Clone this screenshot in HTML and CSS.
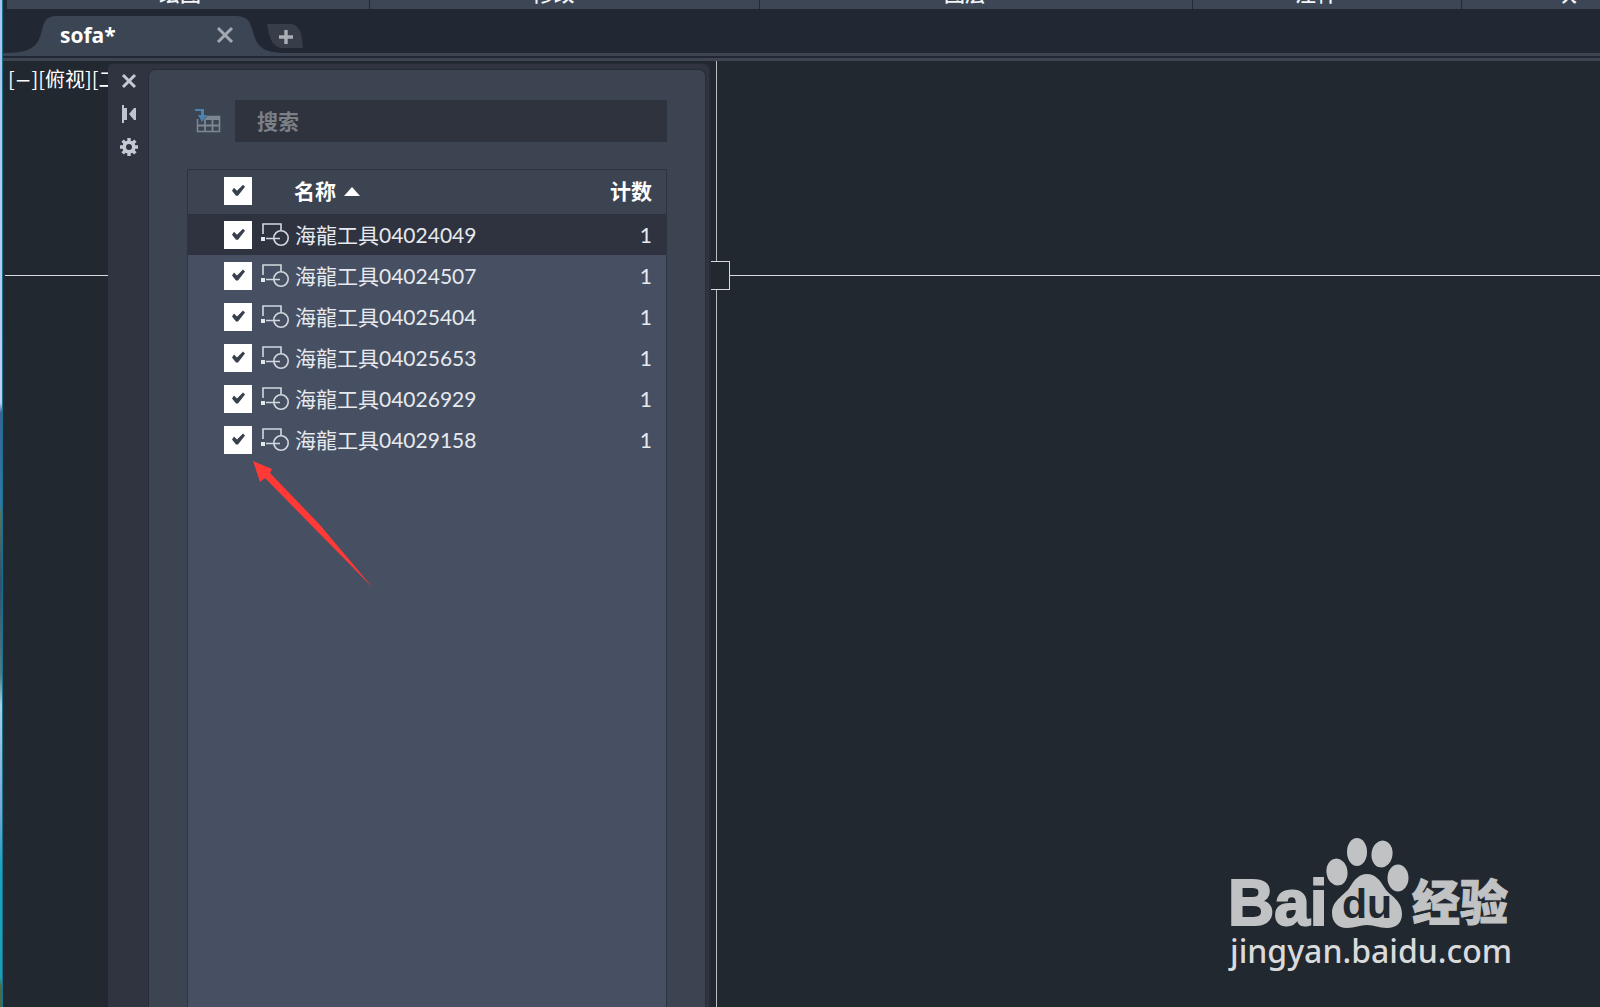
FILE: index.html
```
<!DOCTYPE html>
<html lang="zh-CN">
<head>
	<meta charset="UTF-8">
	<title>sofa*</title>
	<link rel="stylesheet" href="styles.css">
</head>
<body>
	<div class="desktop-edge"></div>
	<div class="app">
		<div class="ribbon">
			<div class="ribbon-panel draw">绘图</div>
			<div class="ribbon-panel modify">修改</div>
			<div class="ribbon-panel layers">图层</div>
			<div class="ribbon-panel notes">注释</div>
			<div class="ribbon-panel block">块</div>
		</div>

		<div class="tabs">
			<div class="tab">
				<svg class="tab-shape" viewBox="0 0 284 40" preserveAspectRatio="none"><path d="M0 40V37C26 37 34 32 38 18C41 6 42 0 54 0H231C245 0 247 5 250 16C254 31 260 37 284 37V40Z" fill="#3c4553"/></svg>
				<span class="tab-name">sofa*</span>
				<button class="tab-close" title="关闭"><svg width="18" height="18" viewBox="0 0 18 18"><path d="M2 2L16 16M16 2L2 16" stroke="#a4a9b1" stroke-width="3"/></svg></button>
			</div>
			<button class="tab-new" title="新图形"><svg width="36" height="24" viewBox="0 0 36 24"><path d="M0 0H25C33 2 35 10 36 24H14C4 22 2 12 0 0Z" fill="#373d49"/><path d="M19 6V20M12 13H26" stroke="#a9adb4" stroke-width="3.4"/></svg></button>
		</div>

		<div class="workspace">
			<div class="cross-h"></div>
			<div class="cross-v"></div>
			<div class="pickbox"></div>

			<div class="view-label">[<span class="minus">−</span>][俯视][二维线框]</div>

			<div class="palette">
				<div class="rail">
					<button title="关闭"><svg width="18" height="18" viewBox="0 0 18 18"><path d="M3 3L15 15M15 3L3 15" stroke="#c5c9d2" stroke-width="3"/></svg></button>
					<button title="自动隐藏"><svg width="18" height="18" viewBox="0 0 18 18"><path d="M2 0H4V3H7V15H4V18H2Z M16 3V15H14L9 9L14 3Z" fill="#c0c4cf"/></svg></button>
					<button title="特性"><svg width="18" height="18" viewBox="0 0 18 18"><circle cx="9" cy="9" r="4.8" fill="none" stroke="#c5c9d2" stroke-width="3.6"/><path d="M9 0V4M9 14V18M0 9H4M14 9H18M2.6 2.6L5 5M13 13L15.4 15.4M15.4 2.6L13 5M5 13L2.6 15.4" stroke="#c5c9d2" stroke-width="3.4"/></svg></button>
				</div>
				<div class="panel">
					<div class="search-row">
						<button class="insert" title="插入表格"><svg width="26" height="24" viewBox="0 0 26 24"><path d="M2.5 10V22.5H24.5V7.5H12" fill="none" stroke="#7d8692" stroke-width="1.6"/><path d="M12 7H25V11H9Z" fill="#7d8692"/><path d="M2 16.5H25M10 11V23M17.5 9V23" stroke="#7d8692" stroke-width="1.8"/><path d="M0 0H9V6H12L7 13L3 6H6V2H0Z" fill="#4a83b0"/></svg></button>
						<input class="search" type="text" placeholder="搜索" aria-label="搜索">
					</div>
					<div class="list">
						<table>
							<colgroup>
								<col class="w-check">
								<col class="w-icon">
								<col>
								<col class="w-count">
							</colgroup>
							<thead>
								<tr>
									<th class="c-check"><input type="checkbox" aria-label="全选" checked></th>
									<th class="c-name" colspan="2">名称<span class="sort"></span></th>
									<th class="c-count">计数</th>
								</tr>
							</thead>
							<tbody id="rows"></tbody>
						</table>
					</div>
				</div>
			</div>

			<svg class="arrow" width="122" height="128" viewBox="0 0 122 128"><path d="M0 0L19 8L17 12L67 64L120 127L62 68L12 17L7 21Z" fill="#ff3936"/></svg>

			<svg class="logo" width="310" height="140" viewBox="0 0 310 140">
				<g fill="#c1c2c3">
					<text class="logo-bai" x="0" y="91">Bai</text>
					<ellipse cx="109" cy="38" rx="10.5" ry="13.5" transform="rotate(-8 109 38)"/>
					<ellipse cx="129" cy="18" rx="10" ry="14"/>
					<ellipse cx="154" cy="20" rx="10.5" ry="13.5" transform="rotate(8 154 20)"/>
					<ellipse cx="170" cy="44" rx="10.5" ry="13.5"/>
					<path d="M139 40C147 40 152 46 156 53C161 62 174 65 174 80C174 89 168 94 159 94C151 94 146 91 139 91C132 91 127 94 119 94C110 94 104 88 104 79C104 66 117 61 122 53C126 46 131 40 139 40Z"/>
					<text class="logo-cn" x="184" y="86">经验</text>
				</g>
				<text class="logo-du" x="114" y="84" fill="#222830">du</text>
				<text class="logo-url" x="2" y="129" fill="#d9dadb">jingyan.baidu.com</text>
			</svg>
		</div>
	</div>

	<script>

	var names = ['海龍工具04024049', '海龍工具04024507', '海龍工具04025404',
			'海龍工具04025653', '海龍工具04026929', '海龍工具04029158'],
		rows = document.getElementById('rows'),
		icon = '<svg width="28" height="24" viewBox="0 0 28 24"><path d="M2 11V1H20V8M5 15.5H19" fill="none" stroke="#d3d7df" stroke-width="1.6"/><path d="M0 14H4V18H0Z" fill="#e4e7ec"/><circle cx="20" cy="15" r="7.2" fill="none" stroke="#d3d7df" stroke-width="1.6"/></svg>';

	names.forEach(function(name, i) {
		var tr = document.createElement('tr');
		if(i == 0){tr.classList.add('selected')};
		tr.innerHTML = `<td class="c-check"><input type="checkbox" id="b${i}" checked></td>
			<td>${icon}</td>
			<td><label for="b${i}">${name}</label></td>
			<td class="c-count">1</td>`;
		rows.appendChild(tr);
	});

	</script>
</body>
</html>
```
FILE: styles.css
```
* {
	box-sizing: border-box;
}

body {
	margin: 0;
	height: 100vh;
	display: flex;
	overflow: hidden;
	background: #222830;
	color: #e6e9ee;
	font-family: "Lato", "Noto Sans CJK SC", sans-serif;
	font-size: 21px;
}

button {
	display: flex;
	padding: 0;
	border: 0;
	background: none;
	cursor: pointer;
}

svg {
	display: block;
}

.desktop-edge {
	flex: none;
	width: 3px;
	border-right: 1px solid #17718f;
	background: linear-gradient(#a9c4ec 0, #c3cdf0 40%, #3f5f98 41%, #2f78a8 50%, #56705e 51%, #31506e 58%, #4e7c80 67%, #a5cfe4 70%, #7fa7d6 80%, #1ba3bf 86%, #1c9fb5 97%, #4c6a3c 98%);
}

.app {
	flex: 1;
	min-width: 0;
	display: flex;
	flex-direction: column;
}

/* ribbon */
.ribbon {
	flex: none;
	display: flex;
	height: 9px;
	margin-left: 4px;
	overflow: hidden;
	background: #3c4655;
}

.ribbon-panel {
	flex: none;
	display: flex;
	align-items: flex-end;
	justify-content: center;
	height: 9px;
	padding-right: 22px;
	border-right: 1px solid #222a36;
	color: #f2f5f8;
	font-weight: 500;
	line-height: 33px;
}

.draw { width: 363px; padding-right: 16px; }
.modify { width: 390px; }
.layers { width: 433px; }
.notes { width: 269px; }
.block { width: 232px; }

/* file tabs */
.tabs {
	flex: none;
	display: flex;
	height: 52px;
	padding-top: 7px;
	background: linear-gradient(#3e4551, #3e4551) 0 44px / 100% 3px no-repeat,
		linear-gradient(#3e4551, #3e4551) 0 49px / 100% 3px no-repeat, #222833;
}

.tab {
	position: relative;
	display: flex;
	align-items: center;
	justify-content: space-between;
	width: 260px;
	height: 40px;
	padding: 0 29px 2px 57px;
}

.tab-shape {
	position: absolute;
	top: 0;
	left: 0;
	width: 284px;
	height: 40px;
}

.tab-name {
	position: relative;
	color: #fff;
	font-family: "Open Sans", sans-serif;
	font-weight: bold;
}

.tab-close {
	position: relative;
}

.tab-new {
	position: relative;
	height: 24px;
	margin: 8px 0 0 4px;
}

/* drawing area */
.workspace {
	position: relative;
	flex: 1;
	display: flex;
	overflow: hidden;
	background: #222830;
}

.cross-h {
	position: absolute;
	top: 214px;
	left: 2px;
	right: 0;
	height: 1px;
	background: #d8dadd;
}

.cross-v {
	position: absolute;
	top: 0;
	bottom: 0;
	left: 713px;
	width: 1px;
	background: #b9bcc0;
}

.pickbox {
	position: absolute;
	top: 200px;
	left: 698px;
	width: 29px;
	height: 29px;
	border: 1px solid #d8dadd;
	background: #222830;
}

.view-label {
	flex: none;
	width: 105px;
	padding: 3px 0 0 5px;
	overflow: hidden;
	color: #fff;
	font-family: "Noto Sans CJK SC", sans-serif;
	font-size: 20px;
	font-weight: 400;
	line-height: 30px;
	white-space: nowrap;
}

.minus {
	font-family: "DejaVu Sans", sans-serif;
}

/* count palette */
.palette {
	position: relative;
	flex: none;
	display: flex;
	width: 601px;
	margin-top: 3px;
	padding: 6px 4px 0 0;
	border-radius: 4px 6px 0 0;
	background: #2f3440;
	box-shadow: 1px 0 0 1px #262c36;
}

.rail {
	flex: none;
	display: flex;
	flex-direction: column;
	align-items: center;
	gap: 15px;
	width: 41px;
	padding-top: 2px;
}

.panel {
	flex: 1;
	min-width: 0;
	display: flex;
	flex-direction: column;
	padding: 30px 38px 0;
	border-radius: 6px 6px 0 0;
	background: #3c4452;
	box-shadow: 0 0 0 1px #262c38;
}

.search-row {
	display: flex;
	align-items: center;
	gap: 14px;
	padding-left: 8px;
}

.search {
	flex: 1;
	min-width: 0;
	height: 42px;
	padding: 0 21px 2px;
	border: 1px solid #2c3540;
	background: #2e333e;
	color: #e6e9ee;
	font: bold 21px "Noto Sans CJK SC", sans-serif;
}

.search::placeholder {
	color: #7b7f86;
	opacity: 1;
}

.list {
	flex: 1;
	margin-top: 27px;
	border: 1px solid #2d3440;
	border-bottom: 0;
	background: #475062;
}

table {
	width: 100%;
	border-collapse: collapse;
	table-layout: fixed;
}

.w-check { width: 73px; }
.w-icon { width: 34px; }
.w-count { width: 90px; }

th {
	height: 44px;
	padding: 0 0 2px;
	border-bottom: 1px solid #2a303c;
	background: #3c4452;
	color: #fff;
	font-weight: bold;
	line-height: 28px;
	text-align: left;
}

td {
	height: 41px;
	padding: 0;
	line-height: 30px;
	white-space: nowrap;
}

.selected {
	background: #2e333f;
}

.c-check {
	padding-left: 36px;
}

.c-name {
	padding-left: 33px;
}

.c-count {
	padding-right: 14px;
	text-align: right;
}

.sort {
	display: inline-block;
	margin-left: 8px;
	border: 8px solid transparent;
	border-top: 0;
	border-bottom: 9px solid #fff;
	vertical-align: 3px;
}

input[type="checkbox"] {
	appearance: none;
	display: block;
	width: 28px;
	height: 28px;
	margin: 0;
	background: #fff;
}

input[type="checkbox"]:checked::before {
	content: "";
	display: block;
	width: 28px;
	height: 28px;
	background: #38404d;
	clip-path: polygon(8px 14px, 10px 11px, 13px 14px, 19px 8px, 21px 10px, 14px 19px, 12px 19px);
}

/* overlays */
.arrow {
	position: absolute;
	top: 400px;
	left: 250px;
}

.logo {
	position: absolute;
	right: 62px;
	bottom: 33px;
}

.logo text {
	font-family: "Liberation Sans", sans-serif;
	font-weight: bold;
}

.logo .logo-bai {
	font-size: 64px;
	stroke: #c1c2c3;
	stroke-width: 2px;
}

.logo .logo-du {
	font-size: 41px;
}

.logo .logo-cn {
	font-family: "Noto Sans CJK SC", sans-serif;
	font-size: 48px;
	font-weight: 900;
	stroke: #c1c2c3;
	stroke-width: 1px;
}

.logo .logo-url {
	font-family: "Noto Sans", sans-serif;
	font-size: 32px;
	font-weight: 500;
}
```
